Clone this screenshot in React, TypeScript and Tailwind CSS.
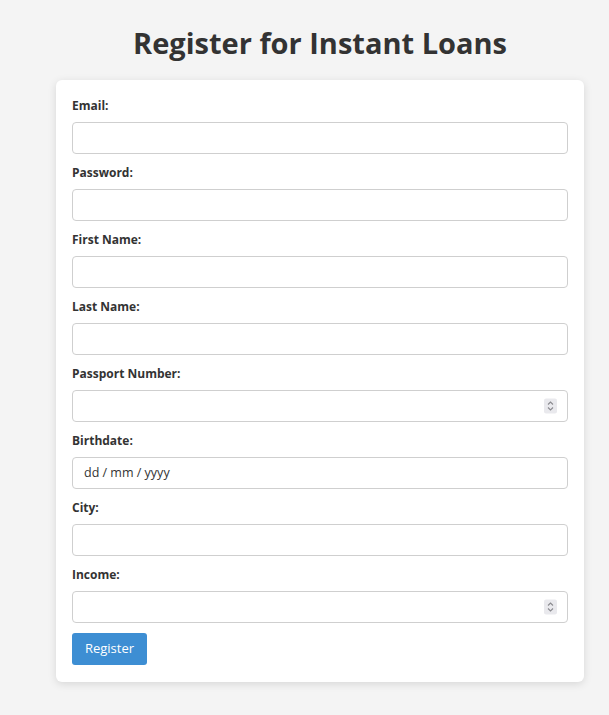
import { type ReactNode } from "react";

const fields: { label: string; kind: "text" | "number" | "date" }[] = [
  { label: "Email:", kind: "text" },
  { label: "Password:", kind: "text" },
  { label: "First Name:", kind: "text" },
  { label: "Last Name:", kind: "text" },
  { label: "Passport Number:", kind: "number" },
  { label: "Birthdate:", kind: "date" },
  { label: "City:", kind: "text" },
  { label: "Income:", kind: "number" },
];

const Spinner = () => (
  <span className="absolute right-[10px] top-1/2 flex h-[15px] w-[13px] -translate-y-1/2 items-center justify-center rounded-[2px] bg-[#e9e9ed]">
    <svg width="7" height="11" viewBox="0 0 7 11" fill="none" stroke="#8a8a8f" strokeWidth="1.1">
      <path d="M1 4 L3.5 1.5 L6 4" />
      <path d="M1 7 L3.5 9.5 L6 7" />
    </svg>
  </span>
);

const Box = ({ children }: { children?: ReactNode }) => (
  <div className="relative flex h-[32px] w-full items-center rounded-[4px] border border-[#cfcfcf] bg-white px-[11px] text-[12.5px] text-[#333]">
    {children}
  </div>
);

const App = () => {
  return (
    <main
      className="min-h-[715px] bg-[#f4f4f4] pt-[23px]"
      style={{ fontFamily: '"Open Sans", "Noto Sans", sans-serif' }}
    >
      <div className="ml-[56px] w-[528px]">
        <h1 className="mb-[17px] text-center text-[29px] font-bold leading-[40px] text-[#333]">
          Register for Instant Loans
        </h1>
        <form
          className="flex flex-col rounded-[6px] bg-white px-[16px] pb-[17px] pt-[17px] shadow-[0_2px_8px_rgba(0,0,0,0.12)]"
          onSubmit={(e) => e.preventDefault()}
        >
          {fields.map((f) => (
            <div key={f.label} className="mb-[10px] flex flex-col">
              <label className="mb-[8px] text-[12px] font-bold leading-[17px] text-[#333]">
                {f.label}
              </label>
              {f.kind === "text" && (
                <input className="h-[32px] w-full rounded-[4px] border border-[#cfcfcf] bg-white px-[11px] text-[13px] outline-none" />
              )}
              {f.kind === "number" && (
                <Box>
                  <Spinner />
                </Box>
              )}
              {f.kind === "date" && <Box>dd / mm / yyyy</Box>}
            </div>
          ))}
          <div>
            <button
              type="submit"
              className="h-[32px] w-[75px] rounded-[3px] bg-[#3d8ed3] text-[13px] text-white"
            >
              Register
            </button>
          </div>
        </form>
      </div>
    </main>
  );
};

export default App;
